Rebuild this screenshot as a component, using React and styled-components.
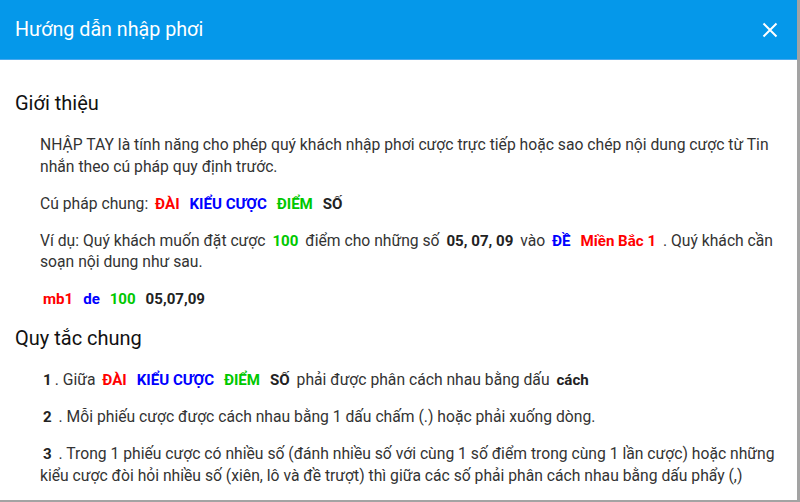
import React from 'react';
import styled, { createGlobalStyle } from 'styled-components';

const GlobalStyle = createGlobalStyle`
  html, body {
    margin: 0;
    padding: 0;
    background: #ffffff;
    font-family: Roboto, "Noto Sans", Arial, sans-serif;
  }
`;

const Modal = styled.div`
  width: 797px;
  height: 500px;
  display: flex;
  flex-direction: column;
  background: #fff;
  border-right: 3px solid #a3a3a3;
  border-bottom: 2px solid #a3a3a3;
`;

const Header = styled.div`
  flex: 0 0 60px;
  display: flex;
  align-items: center;
  justify-content: space-between;
  background: #0598ea;
  border-bottom: 1px solid #4aa8ee;
  box-sizing: border-box;
  padding: 0 19px 0 15px;
`;

const Title = styled.h2`
  margin: 0;
  font-size: 19.7px;
  font-weight: 400;
  color: #fff;
`;

const Close = styled.button`
  border: 0;
  background: none;
  padding: 0;
  display: flex;
  cursor: pointer;
`;

const Body = styled.div`
  flex: 1;
  overflow-y: scroll;
  padding: 30px 12px 1250px 15px;

  &::-webkit-scrollbar {
    width: 12px;
  }
  &::-webkit-scrollbar-track {
    background: #f6f6f6;
    border-left: 1px solid #e8e8e8;
  }
  &::-webkit-scrollbar-thumb {
    background: #c1c1c1;
    border-radius: 6px;
    border: 3px solid #f6f6f6;
  }
`;

const Heading = styled.h3`
  margin: 0 0 18px;
  font-size: 20px;
  font-weight: 400;
  line-height: 26px;
  color: #111;
`;

const Para = styled.p`
  margin: 0 0 15.5px;
  padding-left: 25px;
  font-size: 15.7px;
  line-height: 21.5px;
  color: #333;
`;

const Tag = styled.b`
  font-weight: 700;
  font-size: 15.1px;
  line-height: 1;
  color: ${({ c }) => c || '#222'};
  margin: 0 3px;
`;

const RED = '#ff0000';
const BLUE = '#0000ff';
const GREEN = '#00c800';

const CloseIcon = () => (
  <svg width="16" height="16" viewBox="0 0 16 16">
    <path d="M1.5 1.5 L14.5 14.5 M14.5 1.5 L1.5 14.5" stroke="#fff" strokeWidth="2" fill="none" />
  </svg>
);

export default function App() {
  return (
    <>
      <GlobalStyle />
      <Modal>
        <Header>
          <Title>Hướng dẫn nhập phơi</Title>
          <Close><CloseIcon /></Close>
        </Header>
        <Body>
          <Heading>Giới thiệu</Heading>
          <Para>
            NHẬP TAY là tính năng cho phép quý khách nhập phơi cược trực tiếp hoặc sao chép nội dung cược từ Tin nhắn theo cú pháp quy định trước.
          </Para>
          <Para>
            Cú pháp chung: <Tag c={RED}>ĐÀI</Tag> <Tag c={BLUE}>KIỂU CƯỢC</Tag> <Tag c={GREEN}>ĐIỂM</Tag> <Tag>SỐ</Tag>
          </Para>
          <Para>
            Ví dụ: Quý khách muốn đặt cược <Tag c={GREEN}>100</Tag> điểm cho những số <Tag>05, 07, 09</Tag> vào <Tag c={BLUE}>ĐỀ</Tag> <Tag c={RED}>Miền Bắc 1</Tag> . Quý khách cần soạn nội dung như sau.
          </Para>
          <Para>
            <Tag c={RED}>mb1</Tag> <Tag c={BLUE}>de</Tag> <Tag c={GREEN}>100</Tag> <Tag>05,07,09</Tag>
          </Para>
          <Heading>Quy tắc chung</Heading>
          <Para>
            <Tag>1</Tag>. Giữa <Tag c={RED}>ĐÀI</Tag> <Tag c={BLUE}>KIỂU CƯỢC</Tag> <Tag c={GREEN}>ĐIỂM</Tag> <Tag>SỐ</Tag> phải được phân cách nhau bằng dấu <Tag>cách</Tag>
          </Para>
          <Para>
            <Tag>2</Tag> . Mỗi phiếu cược được cách nhau bằng 1 dấu chấm (.) hoặc phải xuống dòng.
          </Para>
          <Para>
            <Tag>3</Tag> . Trong 1 phiếu cược có nhiều số (đánh nhiều số với cùng 1 số điểm trong cùng 1 lần cược) hoặc những kiểu cược đòi hỏi nhiều số (xiên, lô và đề trượt) thì giữa các số phải phân cách nhau bằng dấu phẩy (,)
          </Para>
        </Body>
      </Modal>
    </>
  );
}
